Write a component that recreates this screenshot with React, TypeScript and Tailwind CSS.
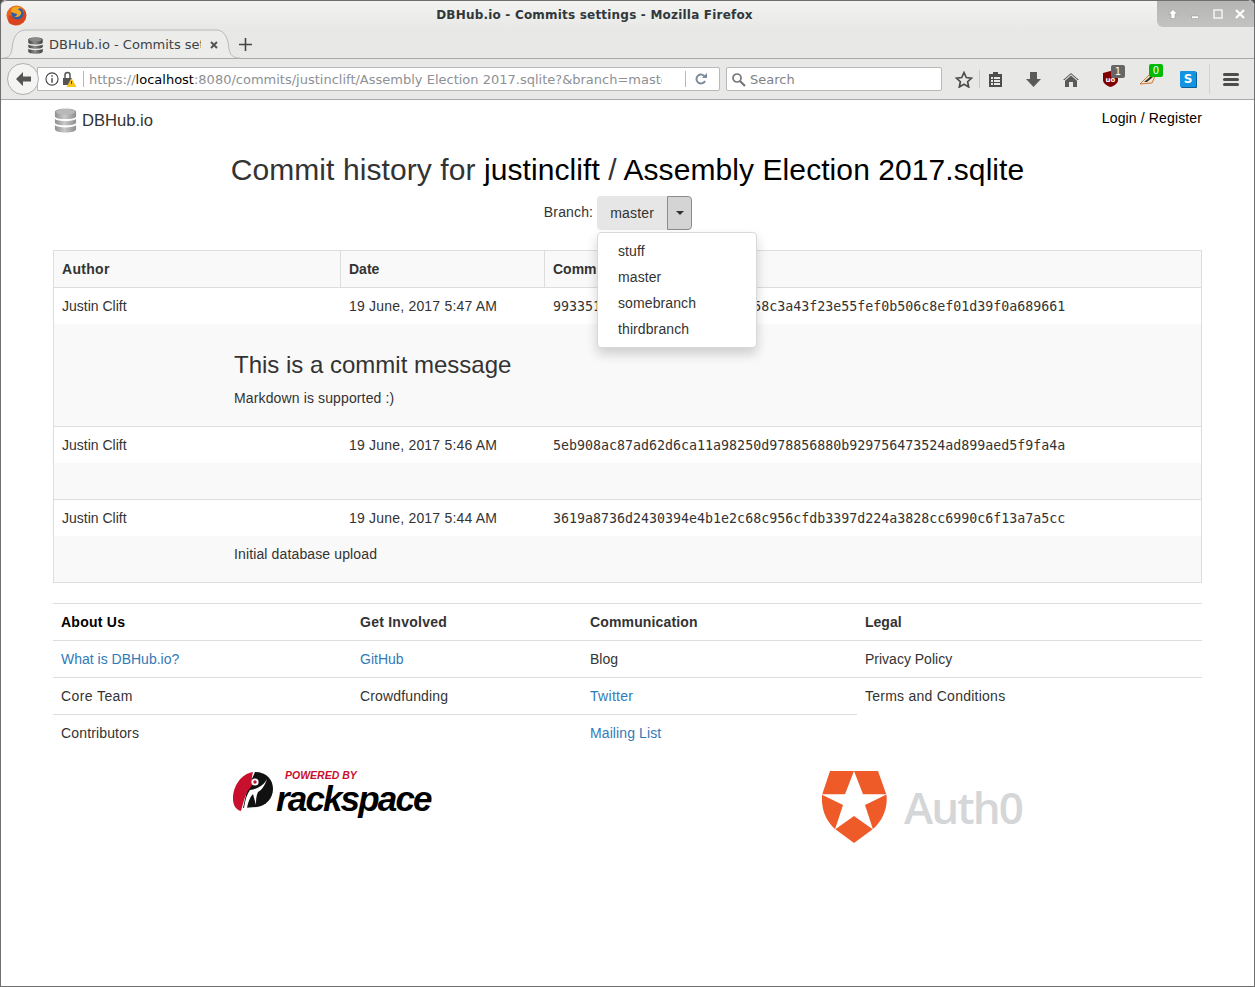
import React from "react";

const sans = "font-['Liberation_Sans',Arial,sans-serif]";
const chromeFont = "font-['DejaVu_Sans',sans-serif]";

function DbIcon({ size = 24, dark = false }: { size?: number; dark?: boolean }) {
  const id = dark ? "dbd" : "dbl";
  const top = dark ? "#8a8a8a" : "#b8b8b8";
  const a = dark ? "#3c3c3c" : "#8f8f8f";
  const b = dark ? "#8c8c8c" : "#c8c8c8";
  return (
    <svg width={size} height={size} viewBox="0 0 24 26" className="shrink-0">
      <defs>
        <linearGradient id={id} x1="0" x2="1" y1="0" y2="0">
          <stop offset="0" stopColor={a} />
          <stop offset="0.45" stopColor={b} />
          <stop offset="1" stopColor={a} />
        </linearGradient>
      </defs>
      <path d="M1 4c0-2 5-3.500 11-3.500S23 2 23 4v4.500c0 2-5 3-11 3S1 10.500 1 8.500z" fill={`url(#${id})`} />
      <path d="M1 11.500c2 1.500 6 2.200 11 2.200s9-.7 11-2.200V15c0 2-5 3-11 3S1 17 1 15z" fill={`url(#${id})`} />
      <path d="M1 18c2 1.500 6 2.200 11 2.200s9-.7 11-2.200v4c0 2-5 3.500-11 3.500S1 24 1 22z" fill={`url(#${id})`} />
      <ellipse cx="12" cy="4" rx="10" ry="3" fill={top} />
    </svg>
  );
}

function FirefoxLogo() {
  return (
    <svg width="21" height="21" viewBox="0 0 21 21">
      <circle cx="10.500" cy="10.500" r="10" fill="#e8641b" />
      <path d="M3 18c5 4 13 2 16-3 2-4 1-8-1-11 0 3-1 5-4 6-3 2-9 1-11 0-1 3-1 6 0 8z" fill="#d9431e" />
      <circle cx="11.500" cy="8.500" r="6" fill="#2a5fa8" />
      <path d="M6 3c3-2 7-2 9 0-2 0-3 1-3 2 2 0 4 2 3 4-1 3-5 4-8 2 2 1 4 0 4-2-2-1-5-1-6-3 0-1 1-2 1-3z" fill="#f5a623" />
    </svg>
  );
}

function Badge({ text, color, cls }: { text: string; color: string; cls: string }) {
  return (
    <span className={`absolute h-[13px] w-[14px] rounded-[2px] text-center text-[10px] leading-[13px] text-white ${cls} ${color}`}>{text}</span>
  );
}

function BrowserChrome() {
  return (
    <header className={`relative h-[100px] shrink-0 border-b border-[#aaaaaa] bg-[#e8e8e7] ${chromeFont}`}>
      <div className="relative flex h-[29px] items-center justify-center rounded-t-[6px] border-t border-[#6f6f6f] bg-gradient-to-b from-[#f3f3f2] to-[#e8e8e7] pr-[66px]">
        <span className="absolute left-[5px] top-[4px]"><FirefoxLogo /></span>
        <span className="pb-[1px] text-[12px] font-bold tracking-[0.2px] text-[#30383b]">DBHub.io - Commits settings - Mozilla Firefox</span>
        <div className="absolute right-0 top-0 flex h-[26px] w-[97px] items-center justify-around rounded-bl-[6px] rounded-tr-[6px] bg-gradient-to-b from-[#b4b4b2] to-[#c3c3c1] pl-[5px] pr-[3px]">
          <svg width="12" height="12" viewBox="0 0 12 12"><path d="M6 1.500l4.500 4.500H8v4.500H4V6H1.500z" fill="#fff" stroke="#8e8e8e" strokeWidth=".5" /></svg>
          <svg width="12" height="12" viewBox="0 0 12 12"><rect x="2.500" y="8" width="7" height="2.500" fill="#fff" stroke="#8e8e8e" strokeWidth=".5" /></svg>
          <svg width="12" height="12" viewBox="0 0 12 12"><rect x="2" y="2" width="8" height="8" fill="none" stroke="#f4f4f4" strokeWidth="1.500" /></svg>
          <svg width="12" height="12" viewBox="0 0 12 12"><path d="M2 2l8 8M10 2l-8 8" stroke="#fff" strokeWidth="2.200" /></svg>
        </div>
      </div>
      <div className="relative flex h-[30px] items-end border-b border-[#a8a8a8]">
        <div className="relative -mb-px ml-[2px] flex h-[30px] w-[237px] items-center pl-[24px] pt-[2px]">
          <svg className="absolute inset-0" width="237" height="30" viewBox="0 0 237 30">
            <path d="M0 29C6 29 8 26 9 20C10 9 13 2 22 1H214C222 2 225 9 226 20C227 26 230 29 237 29" fill="#ececeb" stroke="#b5b9bc" />
          </svg>
          <span className="relative flex items-center">
            <DbIcon size={17} dark />
            <span className="ml-[5px] w-[152px] overflow-hidden whitespace-nowrap text-[13px] text-[#3c4245]">DBHub.io - Commits settings</span>
            <svg className="ml-[8px]" width="10" height="10" viewBox="0 0 10 10"><path d="M2 2l6 6M8 2l-6 6" stroke="#555" strokeWidth="2" /></svg>
          </span>
        </div>
        <svg className="-ml-[1px] mb-[7px]" width="13" height="13" viewBox="0 0 13 13"><path d="M6.500 0v13M0 6.500h13" stroke="#444" strokeWidth="1.600" /></svg>
      </div>
      <div className="flex h-[40px] items-center">
        <div className="z-10 ml-[6px] flex h-[32px] w-[32px] items-center justify-center rounded-full border border-[#b0b0b0] bg-[#f4f4f3]">
          <svg width="17" height="16" viewBox="0 0 17 16"><path d="M8 1L1 8l7 7V10.500h8v-5H8z" fill="#555" /></svg>
        </div>
        <div className="-ml-[2px] flex h-[24px] w-[683px] items-center rounded-r-[2px] border border-[#b8b8b8] bg-white text-[13px]">
          <svg className="ml-[7px]" width="14" height="14" viewBox="0 0 15 15"><circle cx="7.500" cy="7.500" r="6.500" fill="none" stroke="#444" strokeWidth="1.200" /><rect x="6.800" y="6.500" width="1.500" height="5" fill="#444" /><rect x="6.800" y="3.500" width="1.500" height="1.600" fill="#444" /></svg>
          <svg className="ml-[3px]" width="15" height="16" viewBox="0 0 15 16"><path d="M1 7h9v7H1z" fill="#555" /><path d="M3 7V4a2.500 2.500 0 015 0v3" fill="none" stroke="#555" strokeWidth="1.500" /><path d="M9.500 7l5 9h-10z" fill="#f5c518" /><rect x="9" y="10" width="1" height="3" fill="#444" /></svg>
          <span className="ml-[6px] h-[16px] w-px bg-[#b8b8b8]" />
          <span className="ml-[5px] w-[573px] overflow-hidden whitespace-nowrap pt-[1px] text-[#8d9094]">https://<span className="text-black">localhost</span>:8080/commits/justinclift/Assembly Election 2017.sqlite?&amp;branch=master</span>
          <span className="ml-[23px] h-[16px] w-px bg-[#b8b8b8]" />
          <svg className="ml-[9px]" width="12" height="12" viewBox="0 0 12 12"><path d="M10 4a4.500 4.500 0 100 4" fill="none" stroke="#7d8c9c" strokeWidth="2" /><path d="M7 5h5V0z" fill="#7d8c9c" /></svg>
        </div>
        <div className="ml-[6px] flex h-[24px] w-[216px] items-center rounded-[2px] border border-[#b8b8b8] bg-white text-[13px] text-[#7f8285]">
          <svg className="ml-[4px]" width="15" height="15" viewBox="0 0 15 15"><circle cx="6" cy="6" r="4" fill="none" stroke="#777" strokeWidth="1.700" /><path d="M9 9l5 5" stroke="#777" strokeWidth="2.200" /></svg>
          <span className="ml-[4px] pt-[1px]">Search</span>
        </div>
        <svg className="ml-[13px]" width="18" height="17" viewBox="0 0 18 17"><path d="M9 1.500l2.300 5 5.300.6-4 3.600 1.100 5.300L9 13.300 4.300 16l1.100-5.300-4-3.600 5.300-.6z" fill="none" stroke="#4d4d4d" strokeWidth="1.700" /></svg>
        <span className="ml-[6px] h-[18px] w-px bg-[#c8c8c8]" />
        <svg className="ml-[8px]" width="15" height="16" viewBox="0 0 15 16"><path d="M1 3h4V1h5v2h4v13H1z" fill="#4d4d4d" /><path d="M3 6h2v2H3zM6 6h6v2H6zM3 9h2v2H3zM6 9h6v2H6zM3 12h2v2H3zM6 12h6v2H6z" fill="#e8e8e7" /></svg>
        <svg className="ml-[23px]" width="15" height="16" viewBox="0 0 15 16"><path d="M4 1h7v7h4l-7.500 8L0 8h4z" fill="#5a5a5a" /></svg>
        <svg className="ml-[22px]" width="16" height="15" viewBox="0 0 16 15"><path d="M8 1L0 8h2v7h4v-5h4v5h4V8h2z" fill="#5a5a5a" /><path d="M8 3.500L2 8.800V7.500L8 2.200l6 5.300v1.300z" fill="#e8e8e7" /></svg>
        <span className="relative ml-[23px] flex h-[16px] w-[16px] items-center justify-center">
          <svg width="15" height="16" viewBox="0 0 15 16"><path d="M0 2l7.500-2L15 2v7c0 3-3 5.500-7.500 7C3 14.500 0 12 0 9z" fill="#800000" /><text x="2.500" y="11" fontSize="7" fontWeight="700" fill="#fff">uo</text></svg>
          <Badge text="1" color="bg-[#666666]" cls="-top-[6px] left-[9px]" />
        </span>
        <span className="relative ml-[21px] flex h-[16px] w-[18px] items-center justify-center">
          <svg width="18" height="14" viewBox="0 0 18 14"><path d="M1 12L10 3l7-1-4 9z" fill="#f3e3cf" stroke="#c9793a" strokeWidth="1" /><path d="M5 10l7-6 2 1-6 5z" fill="#333" /></svg>
          <Badge text="0" color="bg-[#00bb00]" cls="-top-[7px] left-[10px]" />
        </span>
        <span className="ml-[23px] flex h-[16px] w-[16px] items-center justify-center rounded-[1px] bg-[#1493e0] text-[12px] font-bold leading-none text-white shadow-[1px_1px_0_#0b5f99]">S</span>
        <span className="ml-[13px] h-[30px] w-px bg-[#d2d2d2]" />
        <span className="ml-[13px] flex w-[16px] flex-col gap-[2px]">
          <span className="h-[3px] rounded bg-[#4d4d4d]" />
          <span className="h-[3px] rounded bg-[#4d4d4d]" />
          <span className="h-[3px] rounded bg-[#4d4d4d]" />
        </span>
      </div>
    </header>
  );
}

function CommitRow({ author, date, hash, msgClass, children }: { author: string; date: string; hash: string; msgClass: string; children?: React.ReactNode }) {
  return (
    <>
      <div className="flex h-[37px] items-center border-t border-[#dddddd] bg-white">
        <div className="w-[287px] pl-[8px]">{author}</div>
        <div className="w-[204px] pl-[8px] tracking-[0.2px]">{date}</div>
        <div className="flex-1 pl-[8px] pt-[2px] font-['DejaVu_Sans_Mono',monospace] text-[13.3px]">{hash}</div>
      </div>
      <div className={`bg-[#f9f9f9] pl-[180px] ${msgClass}`}>{children}</div>
    </>
  );
}

function CommitTable() {
  return (
    <section className="relative mx-[52px] mt-[20px] border border-[#dddddd] bg-white">
      <div className="flex h-[36px] items-center bg-[#f9f9f9] font-bold">
        <div className="h-full w-[287px] border-r border-[#dddddd] pl-[8px] leading-[36px] tracking-[0.3px]">Author</div>
        <div className="h-full w-[204px] border-r border-[#dddddd] pl-[8px] leading-[36px]">Date</div>
        <div className="flex-1 pl-[8px]">Commit ID</div>
      </div>
      <CommitRow author="Justin Clift" date="19 June, 2017 5:47 AM" hash="993351e2b1fd6d9ba0c4e8a7f58c3a43f23e55fef0b506c8ef01d39f0a689661" msgClass="h-[102px] pt-[26px]">
        <div className="text-[24px] leading-[29px]">This is a commit message</div>
        <div className="mt-[9px] leading-[20px] tracking-[0.13px]">Markdown is supported :)</div>
      </CommitRow>
      <CommitRow author="Justin Clift" date="19 June, 2017 5:46 AM" hash="5eb908ac87ad62d6ca11a98250d978856880b929756473524ad899aed5f9fa4a" msgClass="h-[36px]" />
      <CommitRow author="Justin Clift" date="19 June, 2017 5:44 AM" hash="3619a8736d2430394e4b1e2c68c956cfdb3397d224a3828cc6990c6f13a7a5cc" msgClass="h-[46px] pt-[8px] leading-[20px] tracking-[0.13px]">
        Initial database upload
      </CommitRow>
    </section>
  );
}

function Foot({ label, w, cls = "" }: { label?: string; w: string; cls?: string }) {
  return (
    <div className={`h-[37px] border-t border-[#dddddd] pl-[8px] leading-[36px] ${w} ${cls}`}>{label}</div>
  );
}

function FooterLinks() {
  const link = "text-[#337ab7]";
  return (
    <section className="mx-[52px] mt-[20px] flex">
      <div className="flex w-[804px] flex-wrap">
        <Foot w="w-[299px]" label="About Us" cls="font-bold text-black tracking-[0.25px]" />
        <Foot w="w-[230px]" label="Get Involved" cls="font-bold tracking-[0.25px]" />
        <Foot w="w-[275px]" label="Communication" cls="font-bold tracking-[0.15px]" />
        <Foot w="w-[299px]" label="What is DBHub.io?" cls={link} />
        <Foot w="w-[230px]" label="GitHub" cls={link} />
        <Foot w="w-[275px]" label="Blog" />
        <Foot w="w-[299px]" label="Core Team" cls="tracking-[0.4px]" />
        <Foot w="w-[230px]" label="Crowdfunding" cls="tracking-[0.15px]" />
        <Foot w="w-[275px]" label="Twitter" cls="text-[#337ab7] tracking-[0.3px]" />
        <Foot w="w-[299px]" label="Contributors" cls="tracking-[0.15px]" />
        <Foot w="w-[230px]" />
        <Foot w="w-[275px]" label="Mailing List" cls="text-[#337ab7] tracking-[0.1px]" />
      </div>
      <div className="flex-1">
        <Foot w="w-full" label="Legal" cls="font-bold" />
        <Foot w="w-full" label="Privacy Policy" />
        <Foot w="w-full" label="Terms and Conditions" cls="tracking-[0.25px]" />
      </div>
    </section>
  );
}

function Logos() {
  return (
    <section className="mx-[52px] mt-[19px] flex items-start">
      <div className="relative ml-[180px] h-[46px] w-[201px] shrink-0">
        <svg width="41" height="42" viewBox="0 0 41 42" className="absolute left-0 top-[2px]">
          <path d="M22 0C34 0 40 8 40 17C40 26 33 34 24 35L10 36L14 18Z" fill="#111" />
          <path d="M20 0C8 2 0 14 0 27C0 33 3 38 8 39C10 32 11 27 14 20L20 12C18 8 19 4 20 0Z" fill="#c8102e" />
          <circle cx="22" cy="10" r="3.600" fill="#fff" />
          <circle cx="22" cy="10" r="1.700" fill="#c8102e" />
          <path d="M34 7C31 13 25 17 17 18C14 22 12 28 11 36L14 36C15 30 17 25 20 22L23 33C23 28 23 24 25 20C29 18 32 13 34 7Z" fill="#fff" />
        </svg>
        <span className={`absolute left-[52px] -top-[1px] text-[10.5px] font-bold italic leading-[13px] text-[#c8102e] ${sans}`}>POWERED BY</span>
        <span className={`absolute left-[43px] top-[8px] text-[35px] font-bold italic leading-[42px] tracking-[-1.850px] text-black ${sans}`}>rackspace</span>
      </div>
      <div className="ml-[388px] flex h-[74px] shrink-0 items-center">
        <svg width="66" height="73" viewBox="0 0 66 73">
          <path d="M8 0H56L64.500 24C66 38 60 50 51 58L32 72L13 58C4 50-1 38 0 24Z" fill="#ee5a28" />
          <path d="M32 0L41 23.300H65L43 34L51 58.500L32 45L13 58.500L21 34L-1 23.300H23Z" fill="#fff" />
        </svg>
        <span className="ml-[16px] font-['Open_Sans',sans-serif] text-[44px] font-semibold leading-none tracking-[-1.900px] text-[#d4d6d8]">Auth0</span>
      </div>
    </section>
  );
}

export default function App() {
  return (
    <div className="flex h-[987px] w-[1255px] flex-col overflow-hidden bg-[#4e4e4e]">
      <div className="flex h-full flex-col overflow-hidden rounded-t-[6px] border-x border-b border-[#6f6f6f] bg-white">
        <BrowserChrome />
        <main className={`relative flex-1 bg-white text-[14px] leading-[20px] text-[#333333] ${sans}`}>
          <div className="mx-[52px] flex h-[46px] items-start justify-between pt-[8px]">
            <div className="flex items-center">
              <DbIcon size={25} />
              <span className="ml-[4px] text-[16.6px] leading-[25px]">DBHub.io</span>
            </div>
            <div className="tracking-[0.13px] text-black">Login / Register</div>
          </div>
          <h1 className="h-[49px] text-center text-[30px] leading-[48px] tracking-[0.08px]">
            Commit history for <span className="text-black">justinclift</span> / <span className="text-black">Assembly Election 2017.sqlite</span>
          </h1>
          <div className="mt-[1px] flex h-[34px] items-start justify-center pr-[19px]">
            <span className="mr-[4px] mt-[6px] leading-[20px] tracking-[0.15px]">Branch:</span>
            <span className="flex h-[34px] w-[70px] items-center justify-center rounded-l-[4px] bg-[#e6e6e6] tracking-[0.15px]">master</span>
            <span className="flex h-[34px] w-[25px] items-center justify-center rounded-r-[4px] border border-[#8c8c8c] bg-[#d4d4d4]">
              <span className="h-0 w-0 border-x-[4px] border-t-[4px] border-x-transparent border-t-[#333333]" />
            </span>
          </div>
          <CommitTable />
          <div className="absolute left-[596px] top-[132px] z-10 w-[160px] rounded-[4px] border border-[#d9d9d9] bg-white py-[5px] shadow-[0_6px_12px_rgba(0,0,0,0.175)]">
            {["stuff", "master", "somebranch", "thirdbranch"].map((b) => (
              <div key={b} className="h-[26px] pl-[20px] leading-[26px] tracking-[0.1px]">{b}</div>
            ))}
          </div>
          <FooterLinks />
          <Logos />
        </main>
      </div>
    </div>
  );
}
